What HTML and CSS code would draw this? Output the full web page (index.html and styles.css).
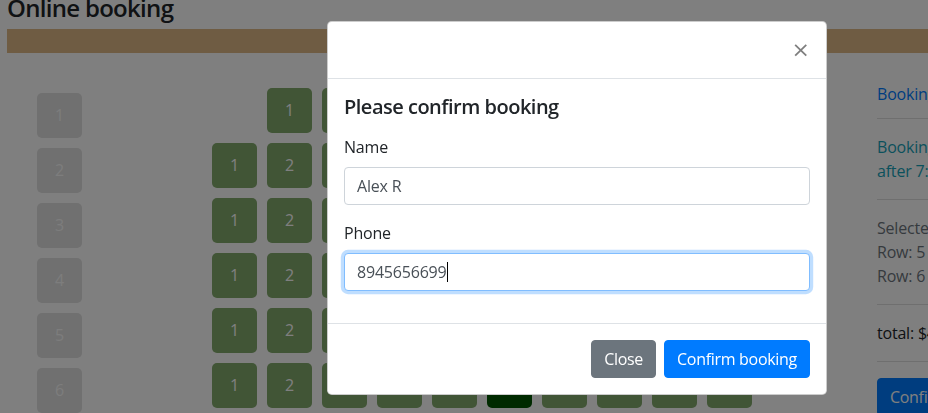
FILE: index.html
```html
<!DOCTYPE html>
<html lang="en">
<head>
<meta charset="utf-8">
<title>Online booking</title>
<link rel="stylesheet" href="styles.css">
</head>
<body>
<div class="page">
  <h4 class="title">Online booking</h4>
  <div class="bar"></div>
  <div class="hall">
    <div class="row-numbers">
      <div class="seat seat-num">1</div>
      <div class="seat seat-num">2</div>
      <div class="seat seat-num">3</div>
      <div class="seat seat-num">4</div>
      <div class="seat seat-num">5</div>
      <div class="seat seat-num">6</div>
    </div>
    <div class="seat-map">
      <div class="seat-row">
        <div class="seat free">1</div><div class="seat free">2</div><div class="seat free">3</div><div class="seat free">4</div><div class="seat free">5</div><div class="seat free">6</div><div class="seat free">7</div><div class="seat free">8</div>
      </div>
      <div class="seat-row">
        <div class="seat free">1</div><div class="seat free">2</div><div class="seat free">3</div><div class="seat free">4</div><div class="seat free">5</div><div class="seat free">6</div><div class="seat free">7</div><div class="seat free">8</div><div class="seat free">9</div><div class="seat free">10</div>
      </div>
      <div class="seat-row">
        <div class="seat free">1</div><div class="seat free">2</div><div class="seat free">3</div><div class="seat free">4</div><div class="seat free">5</div><div class="seat free">6</div><div class="seat free">7</div><div class="seat free">8</div><div class="seat free">9</div><div class="seat free">10</div>
      </div>
      <div class="seat-row">
        <div class="seat free">1</div><div class="seat free">2</div><div class="seat free">3</div><div class="seat free">4</div><div class="seat free">5</div><div class="seat free">6</div><div class="seat free">7</div><div class="seat free">8</div><div class="seat free">9</div><div class="seat free">10</div>
      </div>
      <div class="seat-row">
        <div class="seat free">1</div><div class="seat free">2</div><div class="seat free">3</div><div class="seat free">4</div><div class="seat free">5</div><div class="seat selected">6</div><div class="seat free">7</div><div class="seat free">8</div><div class="seat free">9</div><div class="seat free">10</div>
      </div>
      <div class="seat-row">
        <div class="seat free">1</div><div class="seat free">2</div><div class="seat free">3</div><div class="seat free">4</div><div class="seat free">5</div><div class="seat selected">6</div><div class="seat free">7</div><div class="seat free">8</div><div class="seat free">9</div><div class="seat free">10</div>
      </div>
    </div>
    <aside class="side">
      <div class="side-item side-head"><a href="#" class="side-link">Booking details</a></div>
      <div class="side-item side-info">Booking is open<br>after 7:00 PM</div>
      <div class="side-item side-muted">Selected seats:<br>Row: 5 Seat: 6<br>Row: 6 Seat: 6</div>
      <div class="side-item side-total">total: $40</div>
      <button class="btn btn-primary side-btn" type="button">Confirm booking</button>
    </aside>
  </div>
</div>

<div class="backdrop"></div>

<div class="modal">
  <div class="modal-header">
    <button class="close" type="button" aria-label="Close">&times;</button>
  </div>
  <div class="modal-body">
    <h5 class="modal-heading">Please confirm booking</h5>
    <div class="form-group">
      <label class="form-label" for="name">Name</label>
      <input class="form-control" id="name" type="text" value="Alex R">
    </div>
    <div class="form-group">
      <label class="form-label" for="phone">Phone</label>
      <div class="field">
        <input class="form-control is-focused" id="phone" type="text" value="8945656699">
        <span class="caret-layer" aria-hidden="true"><span class="caret-text">8945656699</span><span class="caret"></span></span>
      </div>
    </div>
  </div>
  <div class="modal-footer">
    <button class="btn btn-secondary" type="button">Close</button>
    <button class="btn btn-primary" type="button">Confirm booking</button>
  </div>
</div>
</body>
</html>
```
FILE: styles.css
```css
* { box-sizing: border-box; }

html, body {
  margin: 0;
  padding: 0;
  width: 928px;
  height: 413px;
  overflow: hidden;
  background: #fff;
  font-family: "Open Sans", "Noto Sans", "DejaVu Sans", sans-serif;
  font-size: 16px;
  line-height: 1.5;
  color: #212529;
  letter-spacing: -0.2px;
}

.page {
  padding-left: 7px;
  width: 1200px;
}

.title {
  margin: -6px 0 6px 0;
  font-size: 24px;
  font-weight: 600;
  line-height: 1.2;
  letter-spacing: -0.7px;
}

.bar {
  height: 24px;
  background: #deb887;
}

.hall {
  display: flex;
  align-items: flex-start;
  margin-top: 13px;
}

.row-numbers {
  display: flex;
  flex-direction: column;
  gap: 10px;
  padding-top: 27px;
  margin-left: 30px;
}

.seat-map {
  display: flex;
  flex-direction: column;
  gap: 10px;
  width: 540px;
  margin-left: 130px;
  padding-top: 22px;
}

.seat-row {
  display: flex;
  justify-content: center;
  gap: 10px;
}

.seat {
  width: 45px;
  height: 45px;
  border-radius: 5px;
  color: #fff;
  text-align: center;
  line-height: 45px;
  font-size: 16px;
  flex: none;
}

.seat-num { background: #e0e0e0; color: #fafafa; }
.free { background: #82aa6c; }
.selected { background: #005500; }

.side {
  width: 260px;
  margin-left: 125px;
}

.side-item {
  padding: 16px 0;
  border-bottom: 1px solid rgba(0, 0, 0, 0.125);
}

.side-head { padding-bottom: 12px; }

.side-link { color: #007bff; text-decoration: none; }
.side-info { color: #17a2b8; }
.side-muted { color: #6c757d; }
.side-total { color: #212529; }

.side-btn { margin-top: 16px; }

.btn {
  display: inline-block;
  font-family: inherit;
  font-size: 16px;
  line-height: 1.5;
  font-weight: 400;
  letter-spacing: -0.3px;
  padding: 6px 12px;
  border: 1px solid transparent;
  border-radius: 4px;
  color: #fff;
  cursor: pointer;
}

.btn-primary { background: #007bff; border-color: #007bff; }
.btn-secondary { background: #6c757d; border-color: #6c757d; }

.backdrop {
  position: fixed;
  inset: 0;
  background: rgba(0, 0, 0, 0.5);
}

.modal {
  position: absolute;
  left: 327px;
  top: 21px;
  width: 500px;
  background: #fff;
  border: 1px solid rgba(0, 0, 0, 0.2);
  border-radius: 4.8px;
  display: flex;
  flex-direction: column;
}

.modal-header {
  display: flex;
  padding: 16px;
  border-bottom: 1px solid #dee2e6;
}

.close {
  margin: -16px -16px -16px auto;
  padding: 16px;
  background: transparent;
  border: 0;
  font-family: "DejaVu Sans", sans-serif;
  font-size: 22px;
  font-weight: 400;
  line-height: 24px;
  color: #000;
  opacity: 0.5;
  text-shadow: 0 1px 0 #fff;
  cursor: pointer;
}

.modal-body { padding: 16px; }

.modal-heading {
  margin: 0 0 16px 0;
  font-size: 20px;
  font-weight: 600;
  line-height: 1.2;
  letter-spacing: -0.5px;
}

.form-group { margin-bottom: 16px; }

.form-label {
  display: inline-block;
  margin-bottom: 8px;
}

.field { position: relative; }

.form-control {
  display: block;
  width: 100%;
  height: 38px;
  padding: 6px 12px;
  font-family: inherit;
  font-size: 16px;
  line-height: 1.5;
  letter-spacing: -0.2px;
  color: #495057;
  background: #fff;
  border: 1px solid #ced4da;
  border-radius: 4px;
  outline: none;
}

.form-control.is-focused {
  border-color: #80bdff;
  box-shadow: 0 0 0 3.2px rgba(0, 123, 255, 0.25);
}

.caret-layer {
  position: absolute;
  left: 13px;
  top: 7px;
  display: flex;
  align-items: center;
  height: 24px;
  font-size: 16px;
  letter-spacing: -0.2px;
  pointer-events: none;
}

.caret-text { visibility: hidden; }

.caret {
  width: 1px;
  height: 20px;
  background: #000;
}

.modal-footer {
  display: flex;
  justify-content: flex-end;
  align-items: center;
  padding: 12px;
  border-top: 1px solid #dee2e6;
}

.modal-footer .btn { margin: 4px; }
```
